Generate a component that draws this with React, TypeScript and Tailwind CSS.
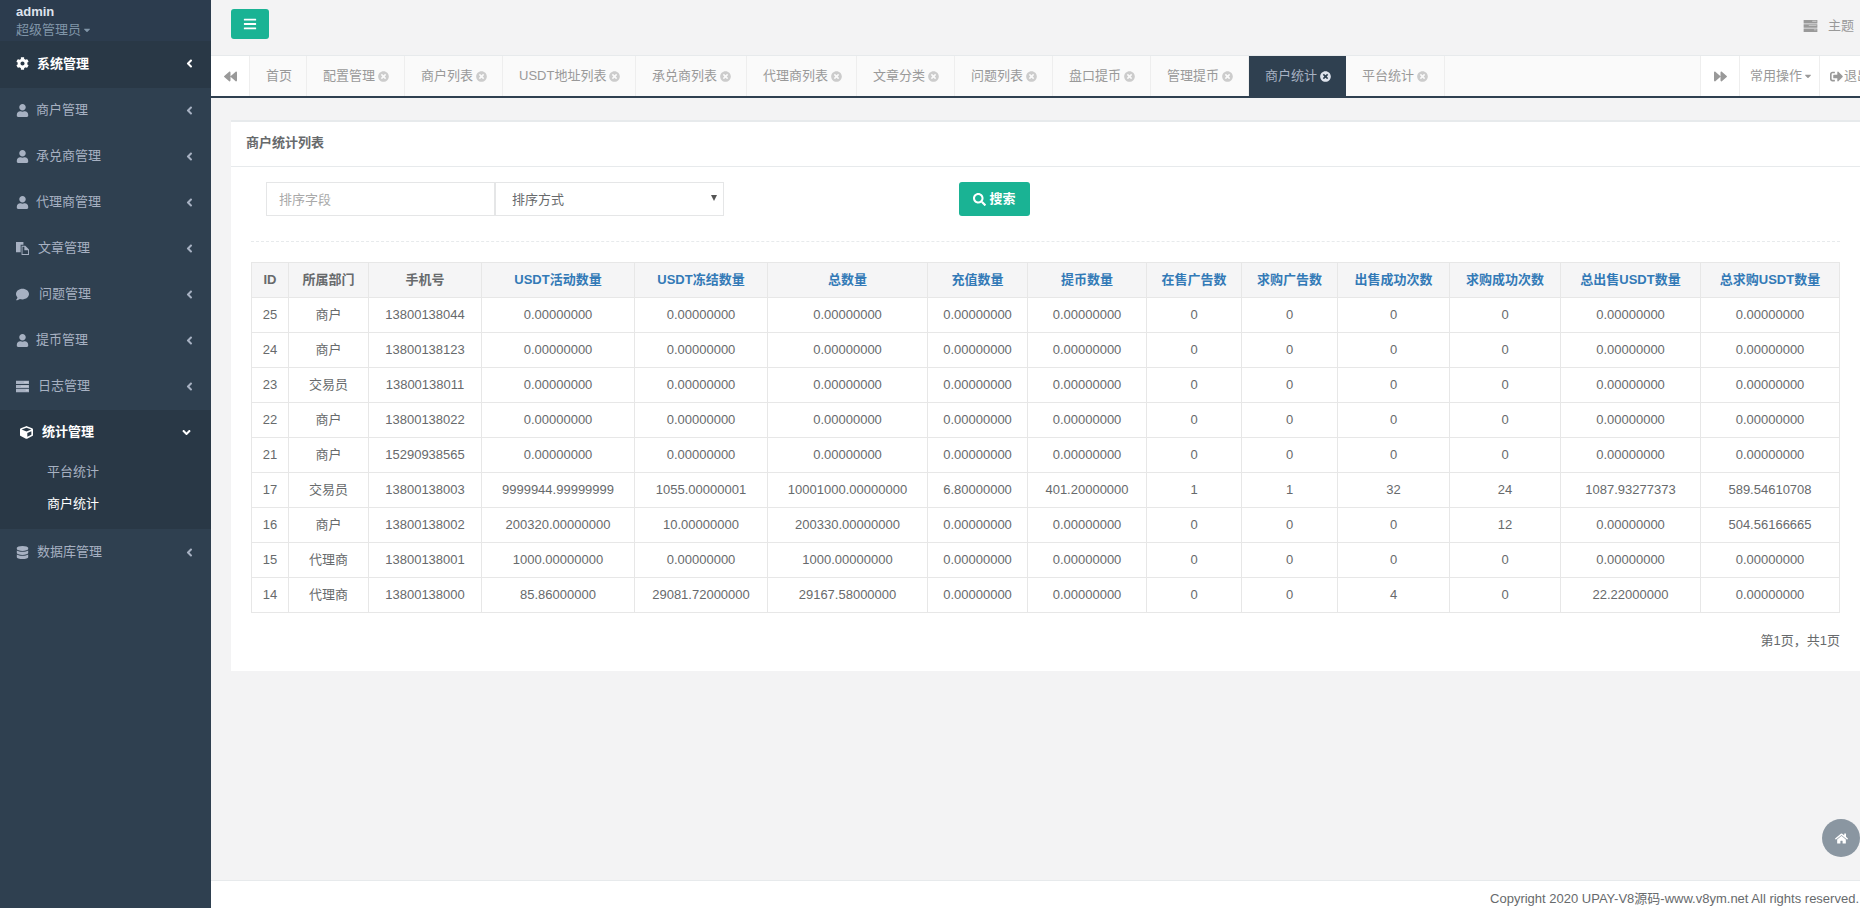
import {
  FaAngleDown,
  FaAngleLeft,
  FaBackward,
  FaBars,
  FaCaretDown,
  FaCog,
  FaComment,
  FaCube,
  FaDatabase,
  FaForward,
  FaHome,
  FaSearch,
  FaSignOutAlt,
  FaTimesCircle,
  FaUser,
} from "react-icons/fa";

const font = "font-['Liberation_Sans','Noto_Sans_CJK_SC',sans-serif]";

function TasksIcon({ className }: { className?: string }) {
  return (
    <svg viewBox="0 0 16 14" className={className} fill="currentColor">
      <path d="M0 0h16v4H0zM0 5h16v4H0zM0 10h16v4H0z" />
      <path d="M10 1h5v1h-5zM6 6h9v1H6zM12 11h3v1h-3z" fill="#fff" fillOpacity=".55" />
    </svg>
  );
}

function FilesIcon({ className }: { className?: string }) {
  return (
    <svg viewBox="0 0 14 14" className={className} fill="currentColor">
      <path d="M0 0h8v3H5v8H0z" />
      <path fillRule="evenodd" d="M6 4h4l4 4v6H6zM7 5v8h6V9H9V5z" />
    </svg>
  );
}

const menus = [
  { name: "商户管理", Icon: FaUser, gap: "mr-[7px]" },
  { name: "承兑商管理", Icon: FaUser, gap: "mr-[7px]" },
  { name: "代理商管理", Icon: FaUser, gap: "mr-[7px]" },
  { name: "文章管理", Icon: FilesIcon, gap: "mr-[9px]" },
  { name: "问题管理", Icon: FaComment, gap: "mr-[10px]" },
  { name: "提币管理", Icon: FaUser, gap: "mr-[7px]" },
  { name: "日志管理", Icon: TasksIcon, gap: "mr-[9px]" },
];

function Sidebar() {
  return (
    <aside className="w-[211px] shrink-0 bg-[#2f4050] text-[13px]">
      <div className="h-[41px] bg-[#2c3c4e] pl-4 pt-[4px]">
        <div className="text-[13px] font-bold leading-[16px] text-[#dfe4ed]">admin</div>
        <div className="flex items-center text-[13px] leading-[19px] text-[#8095a8]">
          超级管理员
          <FaCaretDown className="ml-[1px] h-[10px] w-[10px]" />
        </div>
      </div>
      <div className="flex h-[47px] items-center bg-[#293846] pb-[2px] pl-4 pr-[15px] font-semibold text-white">
        <FaCog className="mr-[8px] h-[13px] w-[13px]" />
        <span className="flex-1">系统管理</span>
        <FaAngleLeft className="h-[13px] w-[13px]" />
      </div>
      {menus.map(({ name, Icon, gap }) => (
        <div key={name} className="flex h-[46px] items-center pb-[2px] pl-4 pr-[15px] text-[#a7b1c2]">
          <Icon className={`h-[13px] w-[13px] ${gap}`} />
          <span className="flex-1">{name}</span>
          <FaAngleLeft className="h-[13px] w-[13px]" />
        </div>
      ))}
      <div className="bg-[#293846]">
        <div className="flex h-[46px] items-center pb-[2px] pl-5 pr-[18px] font-semibold text-white">
          <FaCube className="mr-[9px] h-[13px] w-[13px]" />
          <span className="flex-1">统计管理</span>
          <FaAngleDown className="h-[13px] w-[13px]" />
        </div>
        <div className="h-[73px] pl-[47px] text-[13px]">
          <div className="flex h-[32px] items-center text-[#a7b1c2]">平台统计</div>
          <div className="flex h-[32px] items-center text-white">商户统计</div>
        </div>
      </div>
      <div className="flex h-[46px] items-center pl-4 pr-[15px] text-[#a7b1c2]">
        <FaDatabase className="mr-[8px] h-[13px] w-[13px]" />
        <span className="flex-1">数据库管理</span>
        <FaAngleLeft className="h-[13px] w-[13px]" />
      </div>
    </aside>
  );
}

const tabs: { name: string; w: string; close?: boolean; active?: boolean }[] = [
  { name: "首页", w: "w-[57px]" },
  { name: "配置管理", w: "w-[98px]", close: true },
  { name: "商户列表", w: "w-[98px]", close: true },
  { name: "USDT地址列表", w: "w-[133px]", close: true },
  { name: "承兑商列表", w: "w-[111px]", close: true },
  { name: "代理商列表", w: "w-[110px]", close: true },
  { name: "文章分类", w: "w-[98px]", close: true },
  { name: "问题列表", w: "w-[98px]", close: true },
  { name: "盘口提币", w: "w-[98px]", close: true },
  { name: "管理提币", w: "w-[98px]", close: true },
  { name: "商户统计", w: "w-[97px]", close: true, active: true },
  { name: "平台统计", w: "w-[99px]", close: true },
];

function TabBar() {
  return (
    <div className="flex h-[43px] shrink-0 border-t border-b-2 border-t-[#e7eaec] border-b-[#2f4050] bg-[#fafafa] text-[13px] text-[#999]">
      <div className="flex w-[39px] items-center justify-center border-r border-[#eee] bg-white">
        <FaBackward className="h-[13px] w-[13px]" />
      </div>
      {tabs.map((t) => (
        <div
          key={t.name}
          className={`flex ${t.w} items-center pl-4 ${t.active ? "bg-[#2f4050] text-[#a7b1c2]" : "border-r border-[#eee]"}`}
        >
          <span className="whitespace-nowrap">{t.name}</span>
          {t.close && (
            <FaTimesCircle
              className={`ml-[3px] h-[11px] w-[11px] ${t.active ? "text-[#dfe4ed]" : "text-[#ccc]"}`}
            />
          )}
        </div>
      ))}
      <div className="flex-1" />
      <div className="flex w-[40px] items-center justify-center border-x border-[#eee] bg-white">
        <FaForward className="h-[13px] w-[13px]" />
      </div>
      <div className="flex w-[80px] items-center whitespace-nowrap border-r border-[#eee] bg-white pl-[10px]">
        常用操作
        <FaCaretDown className="ml-[1px] h-[10px] w-[10px]" />
      </div>
      <div className="flex w-[40px] items-center overflow-hidden whitespace-nowrap bg-white pl-[10px]">
        <FaSignOutAlt className="mr-[1px] h-[13px] w-[13px] shrink-0" />
        退出
      </div>
    </div>
  );
}

const colWidths = [
  "w-[37px]",
  "w-[80px]",
  "w-[113px]",
  "w-[153px]",
  "w-[133px]",
  "w-[160px]",
  "w-[100px]",
  "w-[119px]",
  "w-[95px]",
  "w-[96px]",
  "w-[112px]",
  "w-[111px]",
  "w-[140px]",
  "w-[139px]",
];

const plainHeads = ["ID", "所属部门", "手机号"];
const linkHeads = [
  "USDT活动数量",
  "USDT冻结数量",
  "总数量",
  "充值数量",
  "提币数量",
  "在售广告数",
  "求购广告数",
  "出售成功次数",
  "求购成功次数",
  "总出售USDT数量",
  "总求购USDT数量",
];

const z = "0.00000000";
const rows = [
  ["25", "商户", "13800138044", z, z, z, z, z, "0", "0", "0", "0", z, z],
  ["24", "商户", "13800138123", z, z, z, z, z, "0", "0", "0", "0", z, z],
  ["23", "交易员", "13800138011", z, z, z, z, z, "0", "0", "0", "0", z, z],
  ["22", "商户", "13800138022", z, z, z, z, z, "0", "0", "0", "0", z, z],
  ["21", "商户", "15290938565", z, z, z, z, z, "0", "0", "0", "0", z, z],
  ["17", "交易员", "13800138003", "9999944.99999999", "1055.00000001", "10001000.00000000", "6.80000000", "401.20000000", "1", "1", "32", "24", "1087.93277373", "589.54610708"],
  ["16", "商户", "13800138002", "200320.00000000", "10.00000000", "200330.00000000", z, z, "0", "0", "0", "12", z, "504.56166665"],
  ["15", "代理商", "13800138001", "1000.00000000", z, "1000.00000000", z, z, "0", "0", "0", "0", z, z],
  ["14", "代理商", "13800138000", "85.86000000", "29081.72000000", "29167.58000000", z, z, "0", "0", "4", "0", "22.22000000", z],
];

function StatsTable() {
  return (
    <table className="w-[1588px] table-fixed border-collapse text-center text-[13px] text-[#676a6c]">
      <colgroup>
        {colWidths.map((w, i) => (
          <col key={i} className={w} />
        ))}
      </colgroup>
      <thead>
        <tr className="h-[35px] bg-[#f5f5f6] font-bold">
          {plainHeads.map((h) => (
            <th key={h} className="border border-[#e7e7e7] font-bold">
              {h}
            </th>
          ))}
          {linkHeads.map((h) => (
            <th key={h} className="whitespace-nowrap border border-[#e7e7e7] font-bold text-[#337ab7]">
              {h}
            </th>
          ))}
        </tr>
      </thead>
      <tbody>
        {rows.map((r) => (
          <tr key={r[0]} className="h-[35px]">
            {r.map((c, i) => (
              <td key={i} className="whitespace-nowrap border border-[#e7e7e7]">
                {c}
              </td>
            ))}
          </tr>
        ))}
      </tbody>
    </table>
  );
}

export default function App() {
  return (
    <div className={`flex h-screen w-full overflow-hidden ${font}`}>
      <Sidebar />
      <div className="flex min-w-0 flex-1 flex-col bg-[#f3f3f4]">
        <div className="flex h-[55px] shrink-0 items-start justify-between pl-5 pt-[9px]">
          <button className="flex h-[30px] w-[38px] items-center justify-center rounded-[3px] bg-[#1ab394] text-white">
            <FaBars className="h-[14px] w-[14px]" />
          </button>
          <div className="flex items-center pr-[6px] pt-[7px] text-[13px] text-[#999]">
            <TasksIcon className="mr-[10px] h-[12px] w-[15px]" />
            <span className="whitespace-nowrap">主题</span>
          </div>
        </div>
        <TabBar />
        <main className="flex-1 pl-5 pt-[22px]">
          <div className="h-[551px] border-t-2 border-[#e7eaec] bg-white">
            <div className="flex h-[45px] items-center border-b border-[#e7eaec] pb-[2px] pl-[15px] text-[13px] font-bold text-[#676a6c]">
              商户统计列表
            </div>
            <div className="pl-5 pr-5 pt-[15px]">
              <div className="flex items-start pl-[15px]">
                <input
                  placeholder="排序字段"
                  className="h-[34px] w-[229px] border border-[#e5e6e7] px-3 text-[13px] placeholder:text-[#a9a9a9]"
                />
                <div className="relative h-[34px] w-[229px]">
                  <select className="h-[34px] w-full appearance-none border border-[#e5e6e7] bg-white pl-4 pt-[1px] text-[13px] text-[#676a6c]">
                    <option>排序方式</option>
                  </select>
                  <svg viewBox="0 0 6 6" className="absolute right-[7px] top-[13px] h-[6px] w-[6px] text-[#555]" fill="currentColor">
                    <path d="M0 0h6L3 6z" />
                  </svg>
                </div>
                <button className="ml-[235px] flex h-[34px] w-[71px] items-center justify-center rounded-[3px] bg-[#1ab394] text-[13px] font-bold text-white">
                  <FaSearch className="mr-[3px] h-[13px] w-[13px]" />
                  搜索
                </button>
              </div>
              <div className="mb-[20px] mt-[25px] border-t border-dashed border-[#e7eaec]" />
              <StatsTable />
              <div className="pt-[19px] text-right text-[13px] leading-[18px] text-[#676a6c]">第1页，共1页</div>
            </div>
          </div>
        </main>
        <footer className="flex h-[28px] shrink-0 items-end justify-end border-t border-[#e7eaec] bg-white pr-[1px] text-[13px] leading-[18px] text-[#676a6c]">
          Copyright 2020 UPAY-V8源码-www.v8ym.net All rights reserved.
        </footer>
      </div>
      <div className="fixed bottom-[51px] right-0 flex h-[38px] w-[38px] items-center justify-center rounded-full bg-[#8a96a1] text-white">
        <FaHome className="h-[13px] w-[13px]" />
      </div>
    </div>
  );
}
